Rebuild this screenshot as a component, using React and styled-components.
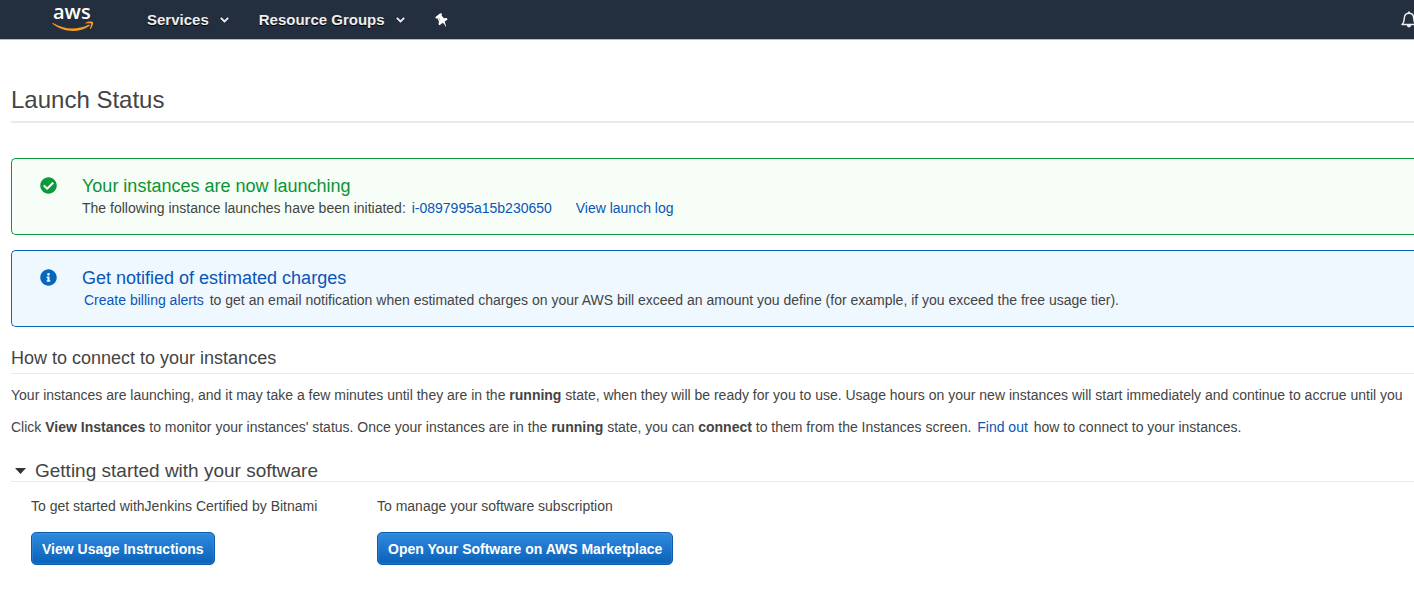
import React, { useState } from "react";
import styled, { createGlobalStyle } from "styled-components";
import { FaCheckCircle, FaInfoCircle } from "react-icons/fa";

const GlobalStyle = createGlobalStyle`
  * { box-sizing: border-box; }
  body {
    margin: 0;
    background: #fff;
    color: #444;
    font-family: "Liberation Sans", Helvetica, Arial, sans-serif;
    font-size: 14px;
    line-height: 20px;
    overflow-x: hidden;
  }
  h1, h2, h3, p { margin: 0; font-weight: 400; }
`;

const Header = styled.header`
  display: flex;
  align-items: center;
  height: 40px;
  padding-left: 52px;
  background: #232f3e;
  border-bottom: 1px solid #b9bcc2;
`;

const HomeLink = styled.a`
  display: block;
  width: 42px;
  margin-right: 53px;
  svg { display: block; overflow: visible; }
`;

const Nav = styled.nav`
  display: flex;
  align-items: center;
  gap: 30px;
`;

const NavButton = styled.button`
  display: flex;
  align-items: center;
  gap: 11px;
  padding: 0;
  border: 0;
  background: none;
  color: #eee;
  font: bold 15px/20px "Liberation Sans", Helvetica, Arial, sans-serif;
  text-shadow: 0 1px 0 #000;
  cursor: pointer;
`;

const BellButton = styled(NavButton)`
  flex: none;
  margin-left: auto;
  margin-right: -3px;
`;

const Main = styled.main`
  padding: 46px 0 36px 11px;
`;

const PageTitle = styled.h1`
  padding-bottom: 7px;
  border-bottom: 2px solid #eaeaea;
  font-size: 24px;
  line-height: 28px;
`;

const Alerts = styled.div`
  display: grid;
  gap: 15px;
  margin-top: 35px;
`;

const tones = {
  success: { line: "#0a9a3c", text: "#0a9436", fill: "#f6fef7" },
  info: { line: "#0866bd", text: "#0a55b8", fill: "#f0f8ff" },
};

const AlertBox = styled.section`
  display: flex;
  gap: 25px;
  padding: 16px 0 15px 28px;
  border: 1px solid ${(p) => tones[p.$tone].line};
  border-right: 0;
  border-radius: 5px 0 0 5px;
  background: ${(p) => tones[p.$tone].fill};
  white-space: nowrap;
  > svg {
    flex: none;
    margin-top: 2px;
    color: ${(p) => tones[p.$tone].line};
  }
`;

const AlertTitle = styled.h2`
  color: ${(p) => tones[p.$tone].text};
  font-size: 18px;
  line-height: 22px;
`;

const Link = styled.a`
  color: #0a55b8;
  text-decoration: none;
  margin: 0 ${(p) => p.$after || 2}px 0 2px;
`;

const SectionTitle = styled.h2`
  display: flex;
  align-items: center;
  margin-top: ${(p) => p.$top}px;
  padding-bottom: ${(p) => p.$pad}px;
  border-bottom: 1px solid #eaeaea;
  font-size: ${(p) => p.$size}px;
  line-height: 20px;
`;

const Toggle = styled.button`
  display: flex;
  align-items: center;
  gap: 9px;
  padding: 0 0 0 4px;
  border: 0;
  background: none;
  color: inherit;
  font: inherit;
  cursor: pointer;
`;

const Text = styled.div`
  display: grid;
  gap: 12px;
  padding-top: 11px;
  white-space: nowrap;
`;

const AlertText = styled.p`
  line-height: 22px;
`;

const Options = styled.div`
  display: flex;
  padding: 14px 0 0 20px;
`;

const Option = styled.div`
  min-width: ${(p) => p.$min || 0}px;
`;

const PrimaryButton = styled.button`
  display: block;
  height: 33px;
  margin-top: 16px;
  padding: 0 10px;
  border: 1px solid #0a5aad;
  border-radius: 5px;
  background: linear-gradient(#2f8ade, #0a62b8);
  box-shadow: inset 0 0 0 1px rgba(90, 160, 225, 0.3);
  color: #fff;
  font: bold 14px/20px "Liberation Sans", Helvetica, Arial, sans-serif;
  white-space: nowrap;
  cursor: pointer;
`;

const AwsLogo = () => (
  <svg width="42" height="39" viewBox="0 0 42 39" aria-hidden="true">
    <text x="1" y="19" fill="#fff" fontFamily="Open Sans, sans-serif" fontSize="20" fontWeight="600">aws</text>
    <path d="M0.5 22.8C12.5 30 25 30.2 36.5 24.8C37.6 24.5 38.2 25.2 37.3 26C26.5 33.9 10.5 32.2 0.3 23.6Z" fill="#f79a20" />
    <path d="M33.4 22.9C36.3 20.8 40.7 21.3 41 22C41.4 23.1 40.5 27.4 38.4 29C38 29.2 37.7 29 37.9 28.6C38.6 26.8 39.4 24.3 38.9 23.6C38.4 22.9 35.6 23.2 33.8 23.5C33.3 23.6 33 23.2 33.4 22.9Z" fill="#f79a20" />
  </svg>
);

const Chevron = () => (
  <svg width="9" height="6" viewBox="0 0 9 6" aria-hidden="true">
    <path d="M0.8 0.8L4.5 4.5L8.2 0.8" fill="none" stroke="#eee" strokeWidth="1.8" />
  </svg>
);

const Pin = () => (
  <svg width="13" height="14" viewBox="0 0 13 14" aria-hidden="true">
    <path d="M5.2 0.2L7 0.8L6.6 2.6L8.8 5.2L11.8 5.1L12.5 6.6L9.6 8.8L10.2 10.2L11.2 13.4L10.6 13.6L8.8 10.6L7.4 10L4.6 12.2L3.6 11.4L3.9 8.6L2.6 5.6L1 5.6L0.2 4.2Z" fill="#fff" />
    <path d="M3.6 4.6L5 7.4" stroke="#7a828c" strokeWidth="0.6" />
  </svg>
);

const Bell = () => (
  <svg width="16" height="17" viewBox="0 0 16 17" aria-hidden="true">
    <path d="M1 13.5C3 11.8 3.2 10.2 3.3 7.2C3.4 4.2 5 2.2 8 2.2S12.6 4.2 12.7 7.2C12.8 10.2 13 11.8 15 13.5Z" fill="none" stroke="#eee" strokeWidth="1.4" strokeLinejoin="round" />
    <path d="M8 0.4V2.2" stroke="#eee" strokeWidth="1.8" />
    <path d="M5.8 14H10.2A2.2 2.4 0 0 1 5.8 14Z" fill="#eee" />
  </svg>
);

const Triangle = ({ open }) => (
  <svg width="11" height="6" viewBox="0 0 11 6" aria-hidden="true">
    <path d={open ? "M0 0H11L5.5 6Z" : "M3 0L9 3L3 6Z"} fill="#333" />
  </svg>
);

export default function App() {
  const [open, setOpen] = useState(true);
  return (
    <>
      <GlobalStyle />
      <Header>
        <HomeLink href="#" aria-label="AWS home"><AwsLogo /></HomeLink>
        <Nav>
          <NavButton>Services <Chevron /></NavButton>
          <NavButton>Resource Groups <Chevron /></NavButton>
          <NavButton aria-label="Pin shortcuts"><Pin /></NavButton>
        </Nav>
        <BellButton aria-label="Notifications"><Bell /></BellButton>
      </Header>
      <Main>
        <PageTitle>Launch Status</PageTitle>
        <Alerts>
          <AlertBox $tone="success">
            <FaCheckCircle size={17} />
            <div>
              <AlertTitle $tone="success">Your instances are now launching</AlertTitle>
              <AlertText>
                The following instance launches have been initiated:{" "}
                <Link href="#" $after={18}>i-0897995a15b230650</Link>{" "}
                <Link href="#">View launch log</Link>
              </AlertText>
            </div>
          </AlertBox>
          <AlertBox $tone="info">
            <FaInfoCircle size={17} />
            <div>
              <AlertTitle $tone="info">Get notified of estimated charges</AlertTitle>
              <AlertText>
                <Link href="#">Create billing alerts</Link>{" "}
                to get an email notification when estimated charges on your AWS bill exceed an amount you define (for example, if you exceed the free usage tier).
              </AlertText>
            </div>
          </AlertBox>
        </Alerts>
        <SectionTitle $top={21} $pad={5} $size={18}>How to connect to your instances</SectionTitle>
        <Text>
          <p>
            Your instances are launching, and it may take a few minutes until they are in the <b>running</b> state, when they will be ready for you to use. Usage hours on your new instances will start immediately and continue to accrue until you
          </p>
          <p>
            Click <b>View Instances</b> to monitor your instances' status. Once your instances are in the <b>running</b> state, you can <b>connect</b> to them from the Instances screen.{" "}
            <Link href="#">Find out</Link> how to connect to your instances.
          </p>
        </Text>
        <SectionTitle $top={24} $pad={0} $size={19}>
          <Toggle aria-expanded={open} onClick={() => setOpen(!open)}>
            <Triangle open={open} />
            Getting started with your software
          </Toggle>
        </SectionTitle>
        {open && (
          <Options>
            <Option $min={346}>
              <p>To get started withJenkins Certified by Bitnami</p>
              <PrimaryButton>View Usage Instructions</PrimaryButton>
            </Option>
            <Option>
              <p>To manage your software subscription</p>
              <PrimaryButton>Open Your Software on AWS Marketplace</PrimaryButton>
            </Option>
          </Options>
        )}
      </Main>
    </>
  );
}
